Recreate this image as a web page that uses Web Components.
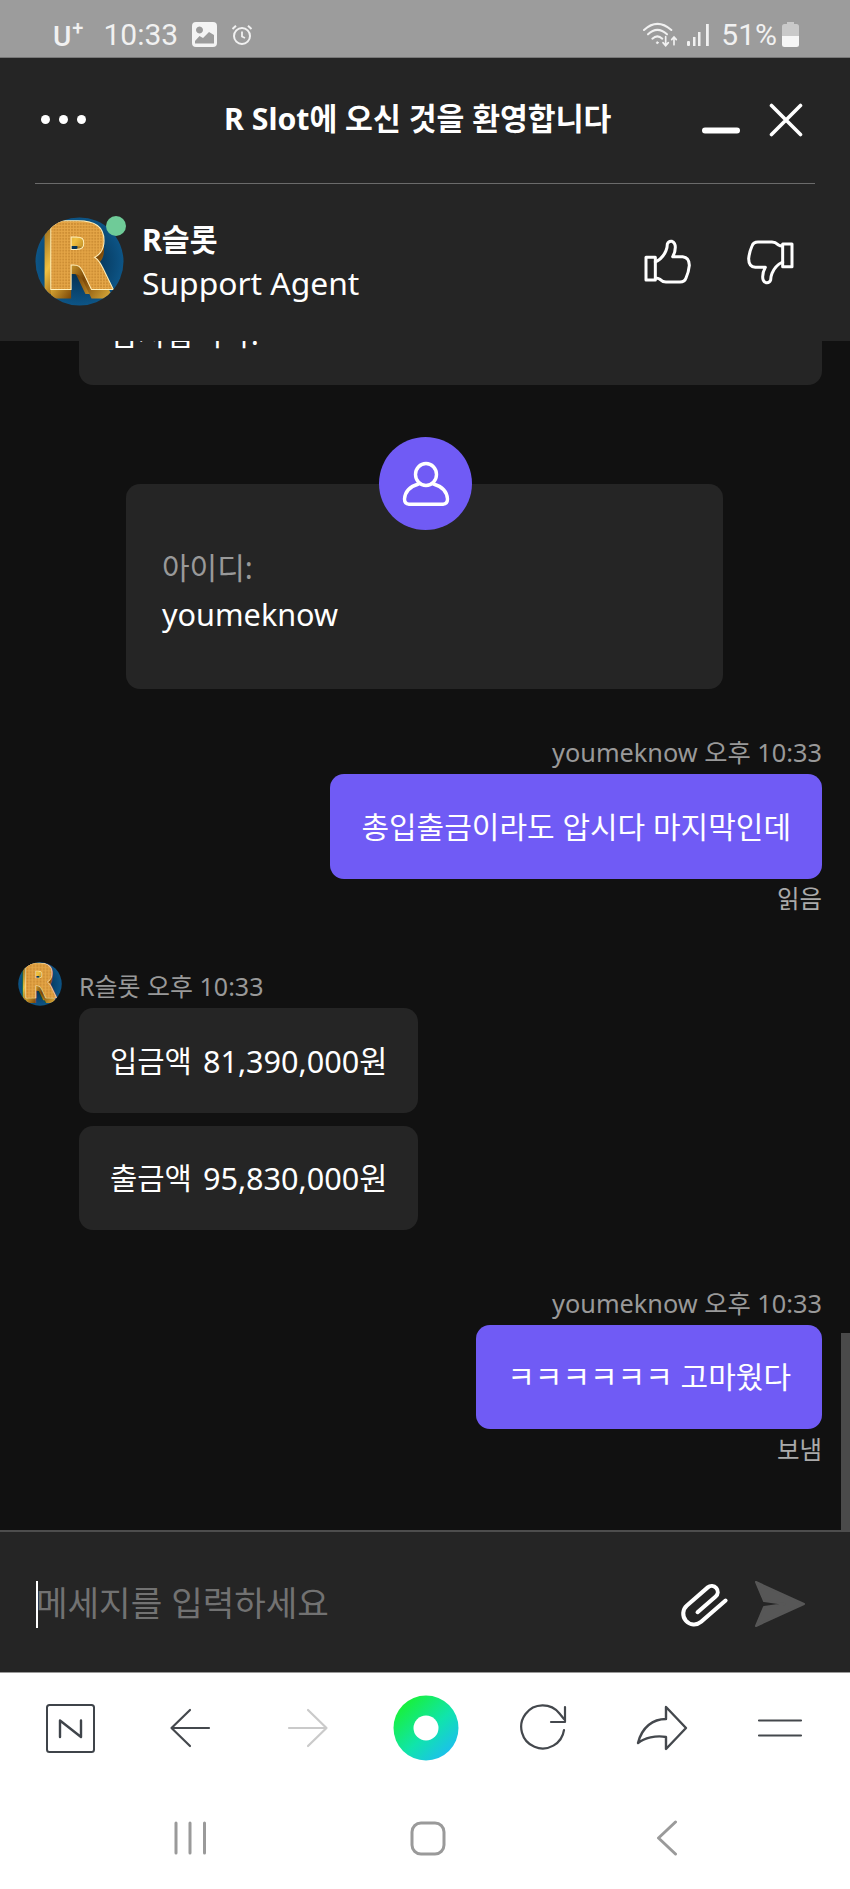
<!doctype html>
<html lang="ko">
<head>
<meta charset="utf-8">
<title>R Slot</title>
<style>
  html, body { margin: 0; padding: 0; height: 100%; }
  body {
    width: 850px;
    height: 1889px;
    overflow: hidden;
    display: flex;
    flex-direction: column;
    font-family: "Noto Sans", "Noto Sans CJK KR", sans-serif;
    background: #111;
  }
  .ko { font-size: 29.7px; margin-right: 3px; }
</style>
</head>
<body>
  <status-bar></status-bar>
  <chat-header></chat-header>
  <chat-log>
    <chat-bubble style="margin-left:79px;align-self:stretch">감사합니다.</chat-bubble>
    <id-card style="margin-top:99px"></id-card>

    <msg-meta side="right" style="margin-top:49px">youmeknow 오후 10:33</msg-meta>
    <chat-bubble mine style="font-size:30px">총입출금이라도 압시다 마지막인데</chat-bubble>
    <msg-status style="margin-top:6px">읽음</msg-status>

    <agent-meta style="margin-top:49px">R슬롯 오후 10:33</agent-meta>
    <chat-bubble style="margin-left:79px"><span class="ko">입금액</span>&nbsp;81,390,000원</chat-bubble>
    <chat-bubble style="margin-left:79px;margin-top:13px;height:104px"><span class="ko">출금액</span>&nbsp;95,830,000원</chat-bubble>

    <msg-meta side="right" style="margin-top:59px">youmeknow 오후 10:33</msg-meta>
    <chat-bubble mine style="height:104px;font-size:30px">ㅋㅋㅋㅋㅋㅋ&nbsp;고마웠다</chat-bubble>
    <msg-status>보냄</msg-status>
  </chat-log>
  <chat-composer></chat-composer>
  <browser-toolbar></browser-toolbar>
  <nav-bar></nav-bar>

<script>
// every element is just a template stamped into an open shadow root
class Stamped extends HTMLElement {
  constructor() {
    super();
    const shadow = this.attachShadow({ mode: 'open' });
    shadow.innerHTML = this.constructor.markup;
  }
}

class RAvatar extends Stamped {
  static markup = `
    <style>
      :host { display: block; width: 90px; height: 90px; flex: none; }
      svg { display: block; width: 100%; height: 100%; }
      text { font-family: "DejaVu Sans", sans-serif; font-weight: 700; font-size: 90px; }
    </style>
    <svg viewBox="0 0 90 90">
      <defs>
        <radialGradient id="sky" cx="50%" cy="50%" r="55%">
          <stop offset="0" stop-color="#02243f"/>
          <stop offset="1" stop-color="#0e5a8e"/>
        </radialGradient>
        <linearGradient id="side" x1="0" y1="0" x2="1" y2="1">
          <stop offset="0" stop-color="#6a3a06"/>
          <stop offset=".35" stop-color="#f0c040"/>
          <stop offset=".6" stop-color="#7a4606"/>
          <stop offset="1" stop-color="#ffd24e"/>
        </linearGradient>
        <pattern id="scale" width="3" height="3" patternUnits="userSpaceOnUse">
          <rect width="3" height="3" fill="#e6a748"/>
          <circle cx="1" cy="1" r=".8" fill="#b0701c"/>
        </pattern>
        <clipPath id="round"><circle cx="45" cy="45" r="44.5"/></clipPath>
      </defs>
      <g clip-path="url(#round)">
        <rect width="90" height="90" fill="url(#sky)"/>
        <g transform="translate(7 72) scale(.98 1)">
          <text x="-3" y="4" fill="url(#side)" stroke="url(#side)" stroke-width="5">R</text>
          <text x="3" y="9" fill="url(#side)" stroke="url(#side)" stroke-width="4">R</text>
          <text x="3" y="0" fill="#fff0bc" stroke="#fff0bc" stroke-width="5">R</text>
          <text x="3" y="0" fill="url(#scale)" stroke="url(#scale)" stroke-width="3">R</text>
        </g>
      </g>
    </svg>`;
}

class StatusBar extends Stamped {
  static markup = `
    <style>
      :host {
        display: flex;
        align-items: center;
        height: 58px;
        flex: none;
        box-sizing: border-box;
        padding: 12px 51px 0 53px;
        background: #9c9c9c;
        color: #f1f1f1;
        font: 400 30px Roboto, sans-serif;
        border-bottom: 1px solid #777;
      }
      .u { font-size: 28px; font-weight: 500; line-height: 1; position: relative; top: 2px; }
      .plus { font-size: 20px; font-weight: 500; position: relative; top: -7px; margin-left: 1px; margin-right: 20px; line-height: 1; }
      svg { display: block; flex: none; }
      .grow { flex: 1; }
    </style>
    <span class="u">U</span><span class="plus">+</span>
    <span>10:33</span>
    <svg style="margin-left:14px" width="25" height="25" viewBox="0 0 25 25">
      <path fill="#f4f4f4" fill-rule="evenodd" d="M4 0h17a4 4 0 0 1 4 4v17a4 4 0 0 1-4 4H4a4 4 0 0 1-4-4V4a4 4 0 0 1 4-4ZM7.500 4.500a3.500 3.500 0 1 0 .01 0ZM3 19v2.500h19V13l-5-3-6 6-3.500-2Z"/>
    </svg>
    <svg style="margin-left:14px" width="22" height="22" viewBox="0 0 22 22" fill="none" stroke="#f1f1f1">
      <circle cx="11" cy="12" r="8" stroke-width="2"/>
      <path d="M11 7.500V12.500L14 14" stroke-width="1.800"/>
      <path d="M1.500 5 5 1.800M20.500 5 17 1.800" stroke-width="2"/>
    </svg>
    <span class="grow"></span>
    <svg width="36" height="26" viewBox="662 68 108 78" fill="none" stroke="#f1f1f1" stroke-linecap="round">
      <path d="M665 92Q705 55 747 92" stroke-width="6"/>
      <path d="M677 105Q705 78 734 105" stroke-width="6"/>
      <path d="M690 118Q705 104 720 118" stroke-width="6"/>
      <circle cx="705" cy="130" r="3" fill="#f1f1f1" stroke-width="2"/>
      <path d="M730 112V138M722 130l8 9 8-9" stroke-width="5"/>
      <path d="M755 136V114M748 121l7-8 7 8" stroke-width="5"/>
    </svg>
    <svg style="margin-left:8px" width="23" height="24" viewBox="0 0 23 24" fill="#f1f1f1">
      <rect x="0" y="18" width="3" height="5" rx="1"/>
      <rect x="6" y="14" width="2.500" height="9"/>
      <rect x="11" y="9" width="2.500" height="14"/>
      <rect x="19" y="1" width="2.800" height="22"/>
    </svg>
    <span style="margin-left:11px">51%</span>
    <svg style="margin-left:5px" width="17" height="25" viewBox="0 0 17 25">
      <path fill="#c9c9c9" d="M5 0h7v2h2.500A2.500 2.500 0 0 1 17 4.500V14H0V4.500A2.500 2.500 0 0 1 2.500 2H5Z"/>
      <path fill="#f6f6f6" d="M0 14h17v8.500a2.500 2.500 0 0 1-2.500 2.500h-12A2.500 2.500 0 0 1 0 22.500Z"/>
    </svg>`;
}

class ChatHeader extends Stamped {
  static markup = `
    <style>
      :host {
        display: block;
        flex: none;
        height: 283px;
        box-sizing: border-box;
        padding: 0 35px;
        background: #252525;
        color: #fff;
        position: relative;
        z-index: 1;
      }
      .top {
        display: flex;
        align-items: center;
        height: 125px;
        border-bottom: 1px solid #6b6b6b;
      }
      .dots { display: flex; gap: 9px; margin: -3px 0 0 6px; width: 45px; }
      .dots i { width: 9px; height: 9px; border-radius: 50%; background: #fff; }
      .title { margin: -4px 0 0 138px; font-size: 30.25px; font-weight: 700; line-height: 40px; flex: 1; white-space: nowrap; }
      svg { display: block; flex: none; }
      .agent { display: flex; align-items: center; padding-top: 33px; }
      .who { margin: -2px 0 0 18px; flex: 1; font-size: 30.25px; line-height: 43px; }
      .who b { display: block; font-weight: 700; }
      .who span { display: block; font-size: 31.8px; }
      r-avatar { width: 89px; height: 89px; position: relative; }
      .wrap { position: relative; flex: none; }
      .online {
        position: absolute;
        right: -2px;
        top: -1px;
        width: 20px;
        height: 20px;
        border-radius: 50%;
        background: #6fcb98;
      }
    </style>
    <div class="top">
      <div class="dots"><i></i><i></i><i></i></div>
      <div class="title">R Slot에 오신 것을 환영합니다</div>
      <svg style="margin-top:20px;position:relative;left:2px" width="38" height="7" viewBox="0 0 38 7"><rect width="38" height="6" y=".5" rx="3" fill="#fff"/></svg>
      <svg style="margin:-2px 12px 0 31px" width="34" height="34" viewBox="0 0 34 34" fill="none" stroke="#fff" stroke-width="3.600" stroke-linecap="round">
        <path d="M2.500 2.500 31.500 31.500M31.500 2.500 2.500 31.500"/>
      </svg>
    </div>
    <div class="agent">
      <div class="wrap"><r-avatar></r-avatar><span class="online"></span></div>
      <div class="who"><b>R슬롯</b><span>Support Agent</span></div>
      <svg class="thumbs" width="50" height="48" viewBox="650 714 150 144" fill="none" stroke="#fff" stroke-width="9" stroke-linejoin="round" stroke-linecap="round">
        <path d="M662 772H690V840H662Z"/>
        <path d="M690 786Q712 776 722 752Q726 742 726 732Q730 722 740 724Q750 728 750 742Q750 756 742 770H772Q792 772 792 796Q790 816 782 834Q778 846 764 846H722Q712 846 704 838Q698 834 690 834"/>
      </svg>
      <svg class="thumbs" style="margin:0 19px 0 54px" width="50" height="48" viewBox="650 714 150 144" fill="none" stroke="#fff" stroke-width="9" stroke-linejoin="round" stroke-linecap="round">
        <g transform="rotate(180 725 786)">
          <path d="M662 772H690V840H662Z"/>
          <path d="M690 786Q712 776 722 752Q726 742 726 732Q730 722 740 724Q750 728 750 742Q750 756 742 770H772Q792 772 792 796Q790 816 782 834Q778 846 764 846H722Q712 846 704 838Q698 834 690 834"/>
        </g>
      </svg>
    </div>`;
}

class ChatLog extends Stamped {
  static markup = `
    <style>
      :host {
        display: flex;
        flex-direction: column;
        justify-content: flex-end;
        flex: 1;
        min-height: 0;
        overflow: hidden;
        box-sizing: border-box;
        padding: 0 28px 66px 0;
        position: relative;
        background: #111;
        color: #fff;
      }
      .scroll {
        position: absolute;
        right: 0;
        bottom: 0;
        width: 9px;
        height: 197px;
        background: #4a4a4a;
      }
    </style>
    <slot></slot>
    <div class="scroll"></div>`;
}

class ChatBubble extends Stamped {
  static markup = `
    <style>
      :host {
        display: flex;
        align-items: center;
        align-self: flex-start;
        flex: none;
        height: 105px;
        box-sizing: border-box;
        padding: 0 31px;
        border-radius: 14px;
        background: #252525;
        color: #fff;
        font-size: 30.6px;
        line-height: 40px;
        white-space: nowrap;
      }
      :host([mine]) { align-self: flex-end; background: #705bf5; }
    </style>
    <slot></slot>`;
}

class MsgMeta extends Stamped {
  static markup = `
    <style>
      :host {
        display: block;
        flex: none;
        height: 28px;
        line-height: 28px;
        margin-bottom: 8px;
        font-size: 25.300px;
        color: #999;
        white-space: nowrap;
      }
      :host([side="right"]) { align-self: flex-end; }
    </style>
    <slot></slot>`;
}

class MsgStatus extends Stamped {
  static markup = `
    <style>
      :host {
        display: block;
        flex: none;
        align-self: flex-end;
        height: 28px;
        line-height: 28px;
        margin-top: 7px;
        font-size: 24.500px;
        color: #aaa;
      }
    </style>
    <slot></slot>`;
}

class AgentMeta extends Stamped {
  static markup = `
    <style>
      :host {
        display: flex;
        flex: none;
        align-items: center;
        height: 44px;
        margin-bottom: 2px;
        padding-left: 18px;
        font-size: 25px;
        color: #999;
      }
      r-avatar { width: 44px; height: 44px; margin-right: 17px; }
      span { position: relative; top: 1px; }
    </style>
    <r-avatar></r-avatar><span><slot></slot></span>`;
}

class IdCard extends Stamped {
  static markup = `
    <style>
      :host {
        display: block;
        flex: none;
        position: relative;
        align-self: flex-start;
        margin-left: 126px;
        width: 597px;
        height: 205px;
        box-sizing: border-box;
        padding: 60px 36px 0;
        border-radius: 14px;
        background: #252525;
        font-size: 30.6px;
        line-height: 47px;
      }
      .label { color: #999; font-size: 30px; }
      .value { color: #fff; }
      .badge {
        position: absolute;
        left: 253px;
        top: -47px;
        width: 93px;
        height: 93px;
        border-radius: 50%;
        background: #705bf5;
        display: flex;
        align-items: center;
        justify-content: center;
      }
      svg { display: block; }
    </style>
    <div class="badge">
      <svg width="48" height="48" viewBox="0 0 48 48" fill="none" stroke="#fff" stroke-width="3.400" stroke-linecap="round" stroke-linejoin="round">
        <ellipse cx="24" cy="14.500" rx="10.500" ry="11"/>
        <path d="M16.500 24C8 26.500 3 32 2.500 39Q2.500 44 7 44.200H41Q45.500 44 45.500 39C45 32 40 26.500 31.500 24"/>
      </svg>
    </div>
    <div class="label">아이디:</div>
    <div class="value">youmeknow</div>`;
}

class ChatComposer extends Stamped {
  static markup = `
    <style>
      :host {
        display: flex;
        align-items: center;
        flex: none;
        height: 143px;
        box-sizing: border-box;
        padding: 5px 44px 0 36px;
        background: #252525;
        border-top: 2px solid #4d4d4d;
        border-bottom: 1px solid #999;
      }
      .caret { width: 2px; height: 47px; background: #fff; flex: none; margin-right: -2px; }
      .hint { flex: 1; margin-top: -4px; color: #727272; font-size: 34.3px; line-height: 47px; white-space: nowrap; }
      svg { display: block; flex: none; }
    </style>
    <span class="caret"></span>
    <span class="hint">메세지를 입력하세요</span>
    <svg width="50" height="46" viewBox="0 0 50 46" fill="none" stroke="#fff" stroke-width="3.400" stroke-linecap="round" stroke-linejoin="round">
      <path transform="translate(25 23) rotate(-41) scale(1.2) translate(-22 -11)" d="M14 12H34A5 5 0 0 0 34 2H11A9 9 0 0 0 11 20H38"/>
    </svg>
    <svg style="margin:-2px 0 0 25px" width="52" height="48" viewBox="0 0 52 48">
      <path fill="#575757" stroke="#575757" stroke-width="2" stroke-linejoin="round" d="M2 2 50 24 2 46 10 27 31 24 10 21Z"/>
    </svg>`;
}

class BrowserToolbar extends Stamped {
  static markup = `
    <style>
      :host {
        display: grid;
        grid-template-columns: repeat(7, 1fr);
        align-items: center;
        justify-items: center;
        flex: none;
        height: 110px;
        box-sizing: border-box;
        padding: 0 11px 0 13px;
        background: #fff;
      }
      svg { display: block; }
    </style>
    <svg style="margin-left:-3px" width="49" height="49" viewBox="0 0 49 49" fill="none" stroke="#3f444a">
      <rect x="1" y="1" width="47" height="47" rx="2.500" stroke-width="2"/>
      <path d="M14 33V16.500L35 33V16.500" stroke-width="2.400" stroke-linejoin="round" stroke-linecap="round"/>
    </svg>
    <svg width="42" height="40" viewBox="0 0 42 40" fill="none" stroke="#44484d" stroke-width="2.200" stroke-linecap="round" stroke-linejoin="round">
      <path d="M21 2 2.500 20 21 38M2.500 20H40"/>
    </svg>
    <svg width="42" height="40" viewBox="0 0 42 40" fill="none" stroke="#cacaca" stroke-width="2.200" stroke-linecap="round" stroke-linejoin="round">
      <path d="M21 2 39.500 20 21 38M39.500 20H2"/>
    </svg>
    <svg width="66" height="66" viewBox="0 0 66 66">
      <defs>
        <linearGradient id="orb" x1=".15" y1=".15" x2=".85" y2=".9">
          <stop offset="0" stop-color="#18f03e"/>
          <stop offset=".55" stop-color="#10e4ac"/>
          <stop offset="1" stop-color="#1cbfee"/>
        </linearGradient>
      </defs>
      <circle cx="33" cy="33" r="32.500" fill="url(#orb)"/>
      <circle cx="33" cy="33" r="12.500" fill="#fff"/>
    </svg>
    <svg width="48" height="48" viewBox="0 0 48 48" fill="none" stroke="#44484d" stroke-width="2.200" stroke-linecap="round" stroke-linejoin="round">
      <path d="M44 26A21.500 21.500 0 1 1 39.500 9.500L44 15"/>
      <path d="M45 3V18H31"/>
    </svg>
    <svg width="52" height="46" viewBox="0 0 52 46" fill="none" stroke="#44484d" stroke-width="2.400" stroke-linecap="round" stroke-linejoin="round">
      <path d="M30 2 50 23 30 44V32C20 30 8 33 2 38 6 22 17 14 30 14Z"/>
    </svg>
    <svg width="46" height="18" viewBox="0 0 46 18" fill="none" stroke="#44484d" stroke-width="2.200" stroke-linecap="round">
      <path d="M2 1.500H44M2 16.500H44"/>
    </svg>`;
}

class NavBar extends Stamped {
  static markup = `
    <style>
      :host {
        display: grid;
        grid-template-columns: repeat(3, 238px);
        justify-items: center;
        align-items: center;
        flex: none;
        height: 106px;
        box-sizing: border-box;
        padding: 4px 65px 0 71px;
        background: #fff;
      }
      svg { display: block; }
    </style>
    <svg width="32" height="34" viewBox="0 0 32 34" stroke="#9a9a9a" stroke-width="3" stroke-linecap="round">
      <path d="M2 2V32M16 2V32M30.500 2V32"/>
    </svg>
    <svg width="36" height="35" viewBox="0 0 36 35" fill="none" stroke="#9a9a9a" stroke-width="3">
      <rect x="2" y="2" width="32" height="31" rx="9"/>
    </svg>
    <svg style="margin-left:2px" width="22" height="36" viewBox="0 0 22 36" fill="none" stroke="#9a9a9a" stroke-width="3" stroke-linecap="round" stroke-linejoin="round">
      <path d="M19.500 2 2.500 18 19.500 34"/>
    </svg>`;
}

customElements.define('r-avatar', RAvatar);
customElements.define('status-bar', StatusBar);
customElements.define('chat-header', ChatHeader);
customElements.define('chat-log', ChatLog);
customElements.define('chat-bubble', ChatBubble);
customElements.define('msg-meta', MsgMeta);
customElements.define('msg-status', MsgStatus);
customElements.define('agent-meta', AgentMeta);
customElements.define('id-card', IdCard);
customElements.define('chat-composer', ChatComposer);
customElements.define('browser-toolbar', BrowserToolbar);
customElements.define('nav-bar', NavBar);
</script>
</body>
</html>
